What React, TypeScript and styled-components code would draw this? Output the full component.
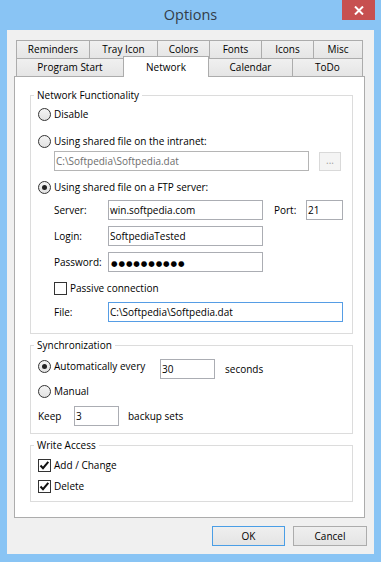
import React from "react";
import styled, { createGlobalStyle } from "styled-components";

const Global = createGlobalStyle`
  html, body { margin: 0; padding: 0; }
  body {
    width: 381px; height: 562px; overflow: hidden;
    font-family: "Open Sans", "Noto Sans", sans-serif;
    font-size: 10px; color: #000;
  }
  * { box-sizing: border-box; }
`;

const Window = styled.div`
  width: 381px;
  height: 562px;
  background: #89c4f4;
  display: flex;
  flex-direction: column;
`;

const TitleBar = styled.div`
  height: 30px;
  flex-shrink: 0;
  display: grid;
  grid-template-columns: 1fr auto 1fr;
`;

const Title = styled.div`
  grid-column: 2;
  align-self: center;
  font-size: 14.5px;
  line-height: 1;
  padding-top: 1px;
  color: #333d48;
`;

const CloseButton = styled.div`
  grid-column: 3;
  justify-self: end;
  align-self: start;
  width: 33px;
  height: 20px;
  margin-right: 6px;
  background: #c75050;
  display: flex;
  align-items: center;
  justify-content: center;
`;

const Client = styled.div`
  margin: 0 7px 8px;
  height: 524px;
  background: #f0f0f0;
  padding: 10px 7px 8px;
  display: flex;
  flex-direction: column;
`;

const TabStrip = styled.div`
  margin: 0 4px 0 2px;
  display: flex;
  flex-direction: column;
`;

const TabRow = styled.div`
  display: flex;
  height: 18px;
`;

const Tab = styled.div<{ $w: number; $active?: boolean }>`
  width: ${(p) => p.$w}px;
  flex-shrink: 0;
  height: ${(p) => (p.$active ? 21 : 18)}px;
  margin-top: ${(p) => (p.$active ? -2 : 0)}px;
  margin-left: -1px;
  &:first-child { margin-left: 0; }
  border: 1px solid #acacac;
  border-bottom: none;
  background: ${(p) => (p.$active ? "#ffffff" : "linear-gradient(#f0f0f0, #e5e5e5)")};
  position: relative;
  z-index: ${(p) => (p.$active ? 2 : 1)};
  display: flex;
  align-items: center;
  justify-content: center;
  line-height: 1;
  padding-bottom: 1px;
`;

const Panel = styled.div`
  height: 442px;
  margin-right: 2px;
  background: #fff;
  border: 1px solid #acacac;
  padding: 12px 11px 0 15px;
  display: flex;
  flex-direction: column;
`;

const Group = styled.fieldset<{ $mt: number; $pt: number; $pb: number }>`
  margin: ${(p) => p.$mt}px 0 0;
  border: 1px solid #dcdcdc;
  padding: ${(p) => p.$pt}px 7px ${(p) => p.$pb}px 7px;
  min-width: 0;
  display: flex;
  flex-direction: column;
`;

const Legend = styled.legend`
  padding: 0 3px;
  margin-left: -4px;
  font-size: 10px;
  line-height: 13px;
`;

const Row = styled.div<{ $mt?: number; $indent?: number; $h?: number }>`
  display: flex;
  align-items: center;
  margin-top: ${(p) => p.$mt ?? 0}px;
  margin-left: ${(p) => p.$indent ?? 0}px;
  height: ${(p) => p.$h ?? 14}px;
  white-space: nowrap;
`;

const Option = styled.div<{ $w?: number }>`
  display: flex;
  align-items: center;
  gap: 3px;
  height: 14px;
  width: ${(p) => (p.$w ? `${p.$w}px` : "auto")};
  flex-shrink: 0;
  align-self: ${(p) => (p.$w ? "flex-start" : "center")};
  margin-top: ${(p) => (p.$w ? 0 : 0)}px;
`;

const RadioCircle = styled.span<{ $checked?: boolean }>`
  width: 13px;
  height: 13px;
  border-radius: 50%;
  border: 1px solid #333;
  background: linear-gradient(#f4f4f4, #e2e2e2);
  display: flex;
  align-items: center;
  justify-content: center;
  flex-shrink: 0;
  &::after {
    content: "";
    display: ${(p) => (p.$checked ? "block" : "none")};
    width: 5px;
    height: 5px;
    border-radius: 50%;
    background: #222;
  }
`;

const CheckBox = styled.span`
  width: 13px;
  height: 13px;
  border: 1px solid #333;
  background: #fff;
  display: flex;
  align-items: center;
  justify-content: center;
  flex-shrink: 0;
`;

const Label = styled.span<{ $w?: number; $ml?: number }>`
  width: ${(p) => (p.$w ? `${p.$w}px` : "auto")};
  margin-left: ${(p) => p.$ml ?? 0}px;
  flex-shrink: 0;
  line-height: 14px;
`;

const TextBox = styled.div<{ $w: number; $focus?: boolean; $disabled?: boolean }>`
  width: ${(p) => p.$w}px;
  height: 20px;
  flex-shrink: 0;
  border: 1px solid ${(p) => (p.$focus ? "#569de5" : p.$disabled ? "#b5b5b5" : "#abadb3")};
  background: #fff;
  color: ${(p) => (p.$disabled ? "#6d6d6d" : "#000")};
  padding: 0 2px 0 1px;
  line-height: 18px;
  white-space: nowrap;
  overflow: hidden;
`;

const Dots = styled.span`
  font-family: "DejaVu Sans", sans-serif;
  font-size: 7.5px;
  letter-spacing: 0.9px;
  padding-left: 1px;
`;

const BrowseButton = styled.div`
  width: 22px;
  height: 19px;
  margin-left: 10px;
  align-self: flex-end;
  background: #f4f4f4;
  border: 1px solid #d9d9d9;
  color: #a0a0a0;
  display: flex;
  align-items: center;
  justify-content: center;
  line-height: 1;
  padding-bottom: 3px;
`;

const ButtonRow = styled.div`
  margin-top: 8px;
  height: 20px;
  display: flex;
  justify-content: flex-end;
  gap: 8px;
`;

const DialogButton = styled.div<{ $w: number; $default?: boolean }>`
  width: ${(p) => p.$w}px;
  height: 20px;
  border: 1px solid ${(p) => (p.$default ? "#4a9ee6" : "#acacac")};
  background: linear-gradient(#efefef, #e4e4e4);
  display: flex;
  align-items: center;
  justify-content: center;
  line-height: 1;
  padding-bottom: 1px;
`;

const tabRows = [
  [
    { label: "Reminders", w: 74 },
    { label: "Tray Icon", w: 69 },
    { label: "Colors", w: 53 },
    { label: "Fonts", w: 53 },
    { label: "Icons", w: 53 },
    { label: "Misc", w: 50 },
  ],
  [
    { label: "Program Start", w: 108 },
    { label: "Network", w: 86, active: true },
    { label: "Calendar", w: 85 },
    { label: "ToDo", w: 71 },
  ],
];

const Radio = ({ label, checked, w }: { label: string; checked?: boolean; w?: number }) => (
  <Option $w={w}>
    <RadioCircle $checked={checked} />
    <Label>{label}</Label>
  </Option>
);

const Check = ({ label, checked }: { label: string; checked?: boolean }) => (
  <Option>
    <CheckBox>
      {checked && (
        <svg width="11" height="11" viewBox="0 0 11 11">
          <path d="M1.5 5.5 L4 8.2 L9.3 1.8" fill="none" stroke="#111" strokeWidth="2" />
        </svg>
      )}
    </CheckBox>
    <Label>{label}</Label>
  </Option>
);

export default function App() {
  return (
    <>
      <Global />
      <Window>
        <TitleBar>
          <Title>Options</Title>
          <CloseButton>
            <svg width="10" height="9" viewBox="0 0 10 9">
              <path d="M1 0.5 L9 8.5 M9 0.5 L1 8.5" stroke="#fff" strokeWidth="2" />
            </svg>
          </CloseButton>
        </TitleBar>
        <Client>
          <TabStrip>
            {tabRows.map((row, i) => (
              <TabRow key={i}>
                {row.map((t) => (
                  <Tab key={t.label} $w={t.w} $active={(t as { active?: boolean }).active}>
                    {t.label}
                  </Tab>
                ))}
              </TabRow>
            ))}
          </TabStrip>
          <Panel>
            <Group $mt={0} $pt={5} $pb={11}>
              <Legend>Network Functionality</Legend>
              <Row>
                <Radio label="Disable" />
              </Row>
              <Row $mt={13}>
                <Radio label="Using shared file on the intranet:" />
              </Row>
              <Row $mt={3} $h={20} $indent={16}>
                <TextBox $w={255} $disabled>C:\Softpedia\Softpedia.dat</TextBox>
                <BrowseButton>...</BrowseButton>
              </Row>
              <Row $mt={9}>
                <Radio label="Using shared file on a FTP server:" checked />
              </Row>
              <Row $mt={6} $h={20} $indent={16}>
                <Label $w={54}>Server:</Label>
                <TextBox $w={155}>win.softpedia.com</TextBox>
                <Label $w={32} $ml={11}>Port:</Label>
                <TextBox $w={37}>21</TextBox>
              </Row>
              <Row $mt={6} $h={20} $indent={16}>
                <Label $w={54}>Login:</Label>
                <TextBox $w={155}>SoftpediaTested</TextBox>
              </Row>
              <Row $mt={6} $h={20} $indent={16}>
                <Label $w={54}>Password:</Label>
                <TextBox $w={155}>
                  <Dots>●●●●●●●●●●</Dots>
                </TextBox>
              </Row>
              <Row $mt={9} $indent={16}>
                <Check label="Passive connection" />
              </Row>
              <Row $mt={7} $h={20} $indent={16}>
                <Label $w={54}>File:</Label>
                <TextBox $w={235} $focus>C:\Softpedia\Softpedia.dat</TextBox>
              </Row>
            </Group>

            <Group $mt={5} $pt={7} $pb={7}>
              <Legend>Synchronization</Legend>
              <Row $h={20}>
                <Radio label="Automatically every" checked w={122} />
                <TextBox $w={55}>30</TextBox>
                <Label $ml={10}>seconds</Label>
              </Row>
              <Row $mt={5}>
                <Radio label="Manual" />
              </Row>
              <Row $mt={8} $h={20}>
                <Label $w={36}>Keep</Label>
                <TextBox $w={45}>3</TextBox>
                <Label $ml={9}>backup sets</Label>
              </Row>
            </Group>

            <Group $mt={5} $pt={6} $pb={8}>
              <Legend>Write Access</Legend>
              <Row>
                <Check label="Add / Change" checked />
              </Row>
              <Row $mt={7}>
                <Check label="Delete" checked />
              </Row>
            </Group>
          </Panel>
          <ButtonRow>
            <DialogButton $w={73} $default>OK</DialogButton>
            <DialogButton $w={74}>Cancel</DialogButton>
          </ButtonRow>
        </Client>
      </Window>
    </>
  );
}
